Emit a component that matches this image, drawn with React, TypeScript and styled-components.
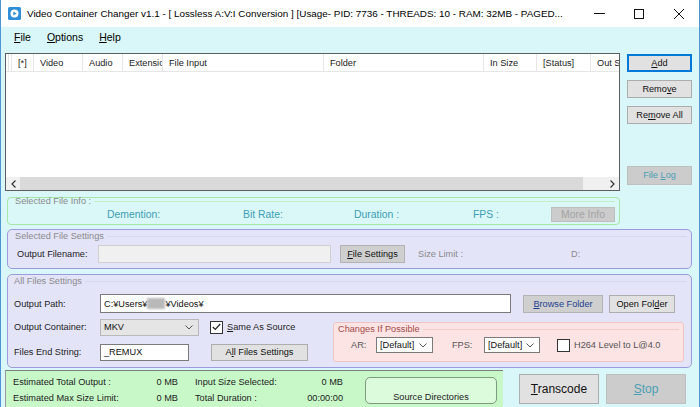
import styled, { createGlobalStyle, css } from "styled-components"

const GlobalStyle = createGlobalStyle`
  html, body { margin: 0; padding: 0; background: #d9f7f8; overflow: hidden; }
  body { font-family: "Liberation Sans", Arial, sans-serif; font-size: 9.2px; color: #1c1c1c; }
  * { box-sizing: border-box; }
`

const Window = styled.div`
  width: 700px;
  height: 407px;
  display: flex;
  flex-direction: column;
  background: #d9f7f8;
  border-left: 1px solid #4f94d4;
  border-right: 1px solid #4f94d4;
  overflow: hidden;
`

const TitleBar = styled.div`
  height: 27px;
  flex: none;
  background: #fff;
  display: flex;
  align-items: center;
`

const AppIcon = styled.svg`
  margin-left: 7px;
  flex: none;
`

const TitleText = styled.div`
  margin-left: 6px;
  font-size: 9.9px;
  color: #000;
  white-space: nowrap;
  flex: 1;
`

const WinControls = styled.div`
  display: flex;
  flex: none;
  margin-left: 4px;
`

const WinButton = styled.div`
  width: 40px;
  height: 27px;
  display: flex;
  align-items: center;
  justify-content: center;
`

const MenuBar = styled.div`
  height: 20px;
  flex: none;
  display: flex;
  align-items: center;
  gap: 16px;
  padding-left: 13px;
  font-size: 10.5px;
  color: #000;
`

const Client = styled.div`
  flex: 1;
  display: flex;
  flex-direction: column;
  padding: 6px 0 0 4px;
`

const TopRow = styled.div`
  display: flex;
  align-items: flex-start;
`

const LeftCol = styled.div`
  width: 615px;
  display: flex;
  flex-direction: column;
`

const ListView = styled.div`
  height: 138px;
  border: 1px solid #5e5e5e;
  background: #fff;
  display: flex;
  flex-direction: column;
`

const ListHeader = styled.div`
  height: 18px;
  display: flex;
  border-bottom: 1px solid #e6e6e6;
  overflow: hidden;
  flex: none;
`

const HeaderSpacer = styled.div`
  width: 4px;
  flex: none;
  border-left: 1px solid #e6e6e6;
  margin-left: 2px;
  border-right: 1px solid #e6e6e6;
`

const HeaderCell = styled.div<{ $w: number }>`
  width: ${p => p.$w}px;
  flex: none;
  border-right: 1px solid #e6e6e6;
  padding-left: 6px;
  display: flex;
  align-items: center;
  white-space: nowrap;
  overflow: hidden;
  color: #1a1a1a;
`

const ListBody = styled.div`
  flex: 1;
`

const HScroll = styled.div`
  height: 13px;
  flex: none;
  background: #f0f0f0;
  display: flex;
  align-items: center;
`

const ScrollArrow = styled.div`
  width: 14px;
  height: 13px;
  display: flex;
  align-items: center;
  justify-content: center;
  flex: none;
`

const ScrollThumb = styled.div`
  height: 13px;
  width: 563px;
  background: #dadada;
  flex: none;
`

const ScrollTrack = styled.div`
  flex: 1;
`

const Panel = styled.div<{ $tone: "info" | "settings" | "changes" }>`
  display: flex;
  flex-direction: column;
  border: 1px solid;
  ${p => p.$tone === "info" && css`
    background: #daf8f8;
    border-color: #a6e6a6;
    border-radius: 4px;
  `}
  ${p => p.$tone === "settings" && css`
    background: #e4e4f9;
    border-color: #9c9cdc;
    border-radius: 5px;
  `}
  ${p => p.$tone === "changes" && css`
    background: #fde4e4;
    border-color: #f1c4c4;
    border-radius: 3px;
  `}
`

const InfoPanel = styled(Panel)`
  margin: 6px 0 0 2px;
  height: 28px;
`

const SettingsPanel = styled(Panel)`
  margin: 4px 0 0 2px;
  width: 685px;
  height: 40px;
`

const AllPanel = styled(Panel)`
  margin: 5px 0 0 2px;
  width: 685px;
  height: 94px;
`

const ChangesPanel = styled(Panel)`
  margin-top: 4px;
  width: 351px;
  height: 40px;
`

const Legend = styled.div<{ $h: number; $pad: number; $color?: string; $line: string }>`
  height: ${p => p.$h}px;
  line-height: ${p => p.$h}px;
  display: flex;
  align-items: center;
  gap: 3px;
  padding-left: ${p => p.$pad}px;
  padding-right: 4px;
  color: ${p => p.$color || "#8a8a8a"};
  white-space: nowrap;
  flex: none;
  &::after {
    content: "";
    flex: 1;
    border-top: 1px solid ${p => p.$line};
  }
`

const InfoRow = styled.div`
  display: grid;
  grid-template-columns: 136px 111px 119px 78px 64px;
  align-items: center;
  height: 18px;
  padding-left: 99px;
  font-size: 10.4px;
  color: #3d9db5;
`

const Row = styled.div<{ $h: number; $mt?: number; $pl?: number }>`
  display: flex;
  align-items: center;
  height: ${p => p.$h}px;
  margin-top: ${p => p.$mt || 0}px;
  padding-left: ${p => p.$pl || 0}px;
  flex: none;
`

const Label = styled.div<{ $w?: number; $color?: string }>`
  width: ${p => (p.$w ? `${p.$w}px` : "auto")};
  flex: none;
  white-space: nowrap;
  color: ${p => p.$color || "#1c1c1c"};
`

const TextBox = styled.div<{ $w: number; $h: number; $disabled?: boolean }>`
  width: ${p => p.$w}px;
  height: ${p => p.$h}px;
  flex: none;
  display: flex;
  align-items: center;
  padding-left: 3px;
  white-space: pre;
  background: ${p => (p.$disabled ? "#f0f0f0" : "#fff")};
  border: 1px solid ${p => (p.$disabled ? "#cfcfcf" : "#7a7a7a")};
  color: #111;
`

const Blurred = styled.span`
  display: inline-block;
  width: 18px;
  height: 11px;
  background: #b9b9b9;
  filter: blur(1.2px);
`

const Select = styled.div<{ $w: number; $h: number; $flat?: boolean }>`
  width: ${p => p.$w}px;
  height: ${p => p.$h}px;
  flex: none;
  display: flex;
  align-items: center;
  justify-content: space-between;
  padding: 0 5px 0 3px;
  background: ${p => (p.$flat ? "#e5e5e5" : "#fff")};
  border: 1px solid ${p => (p.$flat ? "#b9b9b9" : "#7a7a7a")};
  color: #111;
`

const Check = styled.div`
  width: 13px;
  height: 13px;
  flex: none;
  background: #fff;
  border: 1px solid #333;
  display: flex;
  align-items: center;
  justify-content: center;
`

const Button = styled.div<{
  $w: number
  $h: number
  $kind?: "normal" | "focused" | "disabled" | "dark" | "muted"
}>`
  width: ${p => p.$w}px;
  height: ${p => p.$h}px;
  line-height: ${p => p.$h - 2}px;
  flex: none;
  text-align: center;
  white-space: nowrap;
  background: #e1e1e1;
  border: 1px solid #adadad;
  color: #111;
  ${p => p.$kind === "focused" && css`
    border: 2px solid #0078d7;
    line-height: ${p.$h - 4}px;
  `}
  ${p => p.$kind === "disabled" && css`
    background: #cccccc;
    border-color: #bfbfbf;
    color: #a3a3a3;
  `}
  ${p => p.$kind === "muted" && css`
    background: #cccccc;
    border-color: #bfbfbf;
    color: #4a9fb4;
  `}
  ${p => p.$kind === "dark" && css`
    background: #cfcfcf;
    border-color: #b3b3b3;
  `}
`

const SideButtons = styled.div`
  display: flex;
  flex-direction: column;
  margin-left: 7px;
  padding-top: 1px;
  gap: 8px;
`

const LogButton = styled(Button)`
  margin-top: 34px;
`

const Lower = styled.div`
  display: flex;
  align-items: flex-start;
  margin-top: 5px;
  padding-left: 6px;
`

const LowerLeft = styled.div`
  width: 319px;
  display: flex;
  flex-direction: column;
  gap: 7px;
`

const BottomRow = styled.div`
  display: flex;
  align-items: flex-start;
  margin-top: 2px;
`

const StatsPanel = styled.div`
  width: 498px;
  height: 40px;
  background: #c8f7c8;
  border-top: 1px solid #7f7f7f;
  border-left: 1px solid #9a9a9a;
  display: grid;
  grid-template-columns: 127px 38px 17px 105px 43px 22px 132px;
  grid-template-rows: 12px 12px;
  row-gap: 4px;
  padding: 5px 0 0 7px;
  align-items: center;
`

const StatValue = styled.div<{ $col: number }>`
  grid-column: ${p => p.$col};
  text-align: right;
  white-space: nowrap;
`

const StatLabel = styled.div<{ $col: number }>`
  grid-column: ${p => p.$col};
  white-space: nowrap;
`

const SourceButton = styled.div`
  grid-column: 7;
  grid-row: 1 / span 2;
  align-self: start;
  margin-top: 1px;
  height: 27px;
  border: 1px solid #7d9b7d;
  border-radius: 5px;
  background: #dcfadc;
  display: flex;
  align-items: flex-end;
  justify-content: center;
  padding-bottom: 1px;
`

const BigButton = styled(Button)`
  margin-top: 4px;
  font-size: 12px;
`

const cols = [
  { label: "[*]", w: 22 },
  { label: "Video", w: 49 },
  { label: "Audio", w: 40 },
  { label: "Extension", w: 40 },
  { label: "File Input", w: 161 },
  { label: "Folder", w: 160 },
  { label: "In Size", w: 53 },
  { label: "[Status]", w: 54 },
  { label: "Out Size", w: 60 },
]

const Chevron = () => (
  <svg width="8" height="5" viewBox="0 0 8 5">
    <polyline points="0.5,0.5 4,4 7.5,0.5" fill="none" stroke="#555" strokeWidth="1" />
  </svg>
)

const App = () => {
  return (
    <>
      <GlobalStyle />
      <Window>
        <TitleBar>
          <AppIcon width="13" height="13" viewBox="0 0 13 13">
            <rect x="0" y="0" width="13" height="13" rx="1.5" fill="#2e8fd8" />
            <circle cx="6.5" cy="6.5" r="4" fill="#fff" />
            <polygon points="5.3,4.4 5.3,8.6 8.6,6.5" fill="#2e8fd8" />
          </AppIcon>
          <TitleText>
            Video Container Changer v1.1 - [ Lossless A:V:I Conversion ] [Usage- PID: 7736 - THREADS: 10 - RAM: 32MB - PAGED...
          </TitleText>
          <WinControls>
            <WinButton>
              <svg width="11" height="11" viewBox="0 0 11 11">
                <line x1="0" y1="5.5" x2="11" y2="5.5" stroke="#111" strokeWidth="1" />
              </svg>
            </WinButton>
            <WinButton>
              <svg width="10" height="10" viewBox="0 0 10 10">
                <rect x="0.5" y="0.5" width="9" height="9" fill="none" stroke="#111" strokeWidth="1" />
              </svg>
            </WinButton>
            <WinButton>
              <svg width="10" height="10" viewBox="0 0 10 10">
                <line x1="0" y1="0" x2="10" y2="10" stroke="#111" strokeWidth="1" />
                <line x1="10" y1="0" x2="0" y2="10" stroke="#111" strokeWidth="1" />
              </svg>
            </WinButton>
          </WinControls>
        </TitleBar>

        <MenuBar>
          <span><u>F</u>ile</span>
          <span><u>O</u>ptions</span>
          <span><u>H</u>elp</span>
        </MenuBar>

        <Client>
          <TopRow>
            <LeftCol>
              <ListView>
                <ListHeader>
                  <HeaderSpacer />
                  {cols.map(c => (
                    <HeaderCell key={c.label} $w={c.w}>{c.label}</HeaderCell>
                  ))}
                </ListHeader>
                <ListBody />
                <HScroll>
                  <ScrollArrow>
                    <svg width="5" height="8" viewBox="0 0 5 8">
                      <polyline points="4.5,0.5 1,4 4.5,7.5" fill="none" stroke="#333" strokeWidth="1.2" />
                    </svg>
                  </ScrollArrow>
                  <ScrollThumb />
                  <ScrollTrack />
                  <ScrollArrow>
                    <svg width="5" height="8" viewBox="0 0 5 8">
                      <polyline points="0.5,0.5 4,4 0.5,7.5" fill="none" stroke="#333" strokeWidth="1.2" />
                    </svg>
                  </ScrollArrow>
                </HScroll>
              </ListView>

              <InfoPanel $tone="info">
                <Legend $h={7} $pad={7} $line="#c4eec4">Selected File Info :</Legend>
                <InfoRow>
                  <span>Demention:</span>
                  <span>Bit Rate:</span>
                  <span>Duration :</span>
                  <span>FPS :</span>
                  <Button $w={64} $h={15} $kind="disabled">More Info</Button>
                </InfoRow>
              </InfoPanel>
            </LeftCol>

            <SideButtons>
              <Button $w={65} $h={18} $kind="focused"><u>A</u>dd</Button>
              <Button $w={65} $h={18}>Remo<u>v</u>e</Button>
              <Button $w={65} $h={18}>Re<u>m</u>ove All</Button>
              <LogButton $w={65} $h={19} $kind="muted">File <u>L</u>og</LogButton>
            </SideButtons>
          </TopRow>

          <SettingsPanel $tone="settings">
            <Legend $h={12} $pad={7} $line="#d6d6ee">Selected File Settings</Legend>
            <Row $h={19} $mt={2} $pl={9}>
              <Label $w={81}>Output Filename:</Label>
              <TextBox $w={233} $h={18} $disabled />
              <Button $w={65} $h={18} $kind="dark" style={{ marginLeft: 9 }}><u>F</u>ile Settings</Button>
              <Label $w={153} $color="#8a8a8a" style={{ marginLeft: 13 }}>Size Limit :</Label>
              <Label $color="#8a8a8a">D:</Label>
            </Row>
          </SettingsPanel>

          <AllPanel $tone="settings">
            <Legend $h={11} $pad={6} $line="#d6d6ee" style={{ marginTop: 1 }}>All Files Settings</Legend>
            <Row $h={19} $mt={7} $pl={6}>
              <Label $w={86}>Output Path:</Label>
              <TextBox $w={411} $h={19}>
                C:¥Users¥<Blurred />¥Videos¥
              </TextBox>
              <Button $w={80} $h={18} $kind="dark" style={{ marginLeft: 12, color: "#1f3f8f" }}><u>B</u>rowse Folder</Button>
              <Button $w={66} $h={18} style={{ marginLeft: 6 }}>Open Fol<u>d</u>er</Button>
            </Row>
            <Lower>
              <LowerLeft>
                <Row $h={18}>
                  <Label $w={86}>Output Container:</Label>
                  <Select $w={99} $h={17} $flat>
                    <span>MKV</span>
                    <Chevron />
                  </Select>
                  <Check style={{ marginLeft: 11 }}>
                    <svg width="9" height="8" viewBox="0 0 9 8">
                      <polyline points="0.8,4 3.3,6.5 8.2,1" fill="none" stroke="#222" strokeWidth="1.2" />
                    </svg>
                  </Check>
                  <Label style={{ marginLeft: 4 }}><u>S</u>ame As Source</Label>
                </Row>
                <Row $h={18}>
                  <Label $w={86}>Files End String:</Label>
                  <TextBox $w={89} $h={17}>_REMUX</TextBox>
                  <Button $w={97} $h={17} style={{ marginLeft: 22 }}>A<u>l</u>l Files Settings</Button>
                </Row>
              </LowerLeft>
              <ChangesPanel $tone="changes">
                <Legend $h={10} $pad={4} $color="#a34a4a" $line="#f3cccc" style={{ marginTop: 1 }}>Changes If Possible</Legend>
                <Row $h={18} $mt={2} $pl={17}>
                  <Label $w={25} $color="#555">AR:</Label>
                  <Select $w={57} $h={16}>
                    <span>[Default]</span>
                    <Chevron />
                  </Select>
                  <Label $w={32} $color="#555" style={{ marginLeft: 19 }}>FPS:</Label>
                  <Select $w={56} $h={16}>
                    <span>[Default]</span>
                    <Chevron />
                  </Select>
                  <Check style={{ marginLeft: 17 }} />
                  <Label $color="#555" style={{ marginLeft: 4 }}>H264 Level to L@4.0</Label>
                </Row>
              </ChangesPanel>
            </Lower>
          </AllPanel>

          <BottomRow>
            <StatsPanel>
              <StatLabel $col={1}>Estimated Total Output :</StatLabel>
              <StatValue $col={2}>0 MB</StatValue>
              <StatLabel $col={4}>Input Size Selected:</StatLabel>
              <StatValue $col={5}>0 MB</StatValue>
              <SourceButton>Source Directories</SourceButton>
              <StatLabel $col={1}>Estimated Max Size Limit:</StatLabel>
              <StatValue $col={2}>0 MB</StatValue>
              <StatLabel $col={4}>Total Duration :</StatLabel>
              <StatValue $col={5}>00:00:00</StatValue>
            </StatsPanel>
            <BigButton $w={80} $h={30} style={{ marginLeft: 16 }}><u>T</u>ranscode</BigButton>
            <BigButton $w={80} $h={30} $kind="muted" style={{ marginLeft: 7 }}><u>S</u>top</BigButton>
          </BottomRow>
        </Client>
      </Window>
    </>
  )
}

export default App
